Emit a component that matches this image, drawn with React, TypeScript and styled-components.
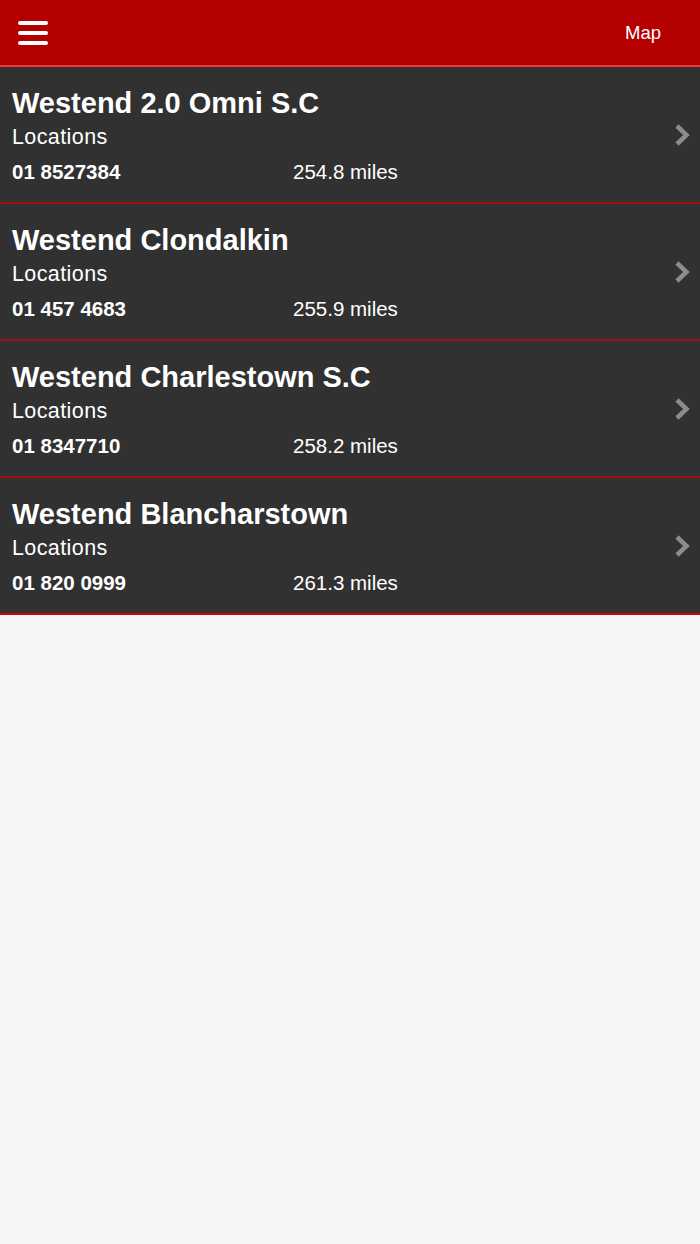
import React from 'react';
import styled, { createGlobalStyle } from 'styled-components';

const GlobalStyle = createGlobalStyle`
	html, body {
		margin: 0;
		padding: 0;
		background: #f6f6f6;
		font-family: 'Liberation Sans', Arial, Helvetica, sans-serif;
	}
`;

const Page = styled.div`
	min-height: 1244px;
	background: #f6f6f6;
`;

const Header = styled.header`
	display: flex;
	justify-content: space-between;
	align-items: center;
	height: 65px;
	padding: 0 16px 0 18px;
	background: #b50000;
	border-bottom: 2px solid #e83a3a;
`;

const MenuButton = styled.button`
	display: flex;
	flex-direction: column;
	gap: 5.5px;
	padding: 0;
	margin-top: 1px;
	border: none;
	background: none;
	cursor: pointer;
`;

const MenuBar = styled.span`
	display: block;
	width: 30px;
	height: 4.5px;
	border-radius: 2px;
	background: #fff;
`;

const MapLink = styled.a`
	color: #fff;
	font-size: 18.5px;
	margin-right: 23px;
	margin-top: 1px;
	text-decoration: none;
`;

const List = styled.ul`
	list-style: none;
	margin: 0;
	padding: 0;
`;

const Row = styled.li<{ $last?: boolean }>`
	display: flex;
	align-items: center;
	height: 135px;
	padding: 0 10px 0 12px;
	background: #313131;
	color: #fff;
	border-bottom: 2px solid ${({ $last }) => ($last ? '#d40000' : '#9b1010')};
`;

const Info = styled.div`
	flex: 1;
	align-self: stretch;
	display: flex;
	flex-direction: column;
	padding-top: 19px;
`;

const Name = styled.h2`
	margin: 0;
	font-size: 29px;
	font-weight: 700;
	line-height: 34px;
`;

const Category = styled.div`
	margin-top: 4px;
	font-size: 21.5px;
	line-height: 26px;
	letter-spacing: 0.4px;
`;

const Details = styled.div`
	display: grid;
	grid-template-columns: 281px auto;
	margin-top: 10px;
	font-size: 20.5px;
	line-height: 24px;
`;

const Phone = styled.span`
	font-weight: 700;
`;

const Chevron = styled.svg`
	width: 16px;
	height: 24px;
	flex-shrink: 0;
`;

const stores = [
	{ name: 'Westend 2.0 Omni S.C', phone: '01 8527384', distance: '254.8 miles' },
	{ name: 'Westend Clondalkin', phone: '01 457 4683', distance: '255.9 miles' },
	{ name: 'Westend Charlestown S.C', phone: '01 8347710', distance: '258.2 miles' },
	{ name: 'Westend Blancharstown', phone: '01 820 0999', distance: '261.3 miles' },
];

const App = () => {
	return (
		<>
			<GlobalStyle />
			<Page>
				<Header>
					<MenuButton aria-label="Menu">
						<MenuBar />
						<MenuBar />
						<MenuBar />
					</MenuButton>
					<MapLink href="#">Map</MapLink>
				</Header>
				<List>
					{stores.map((store, i) => (
						<Row key={store.name} $last={i === stores.length - 1}>
							<Info>
								<Name>{store.name}</Name>
								<Category>Locations</Category>
								<Details>
									<Phone>{store.phone}</Phone>
									<span>{store.distance}</span>
								</Details>
							</Info>
							<Chevron viewBox="0 0 16 24">
								<path
									d="M3 3 L12.5 12 L3 21"
									fill="none"
									stroke="#8c8c8c"
									strokeWidth="4.5"
								/>
							</Chevron>
						</Row>
					))}
				</List>
			</Page>
		</>
	);
};

export default App;
